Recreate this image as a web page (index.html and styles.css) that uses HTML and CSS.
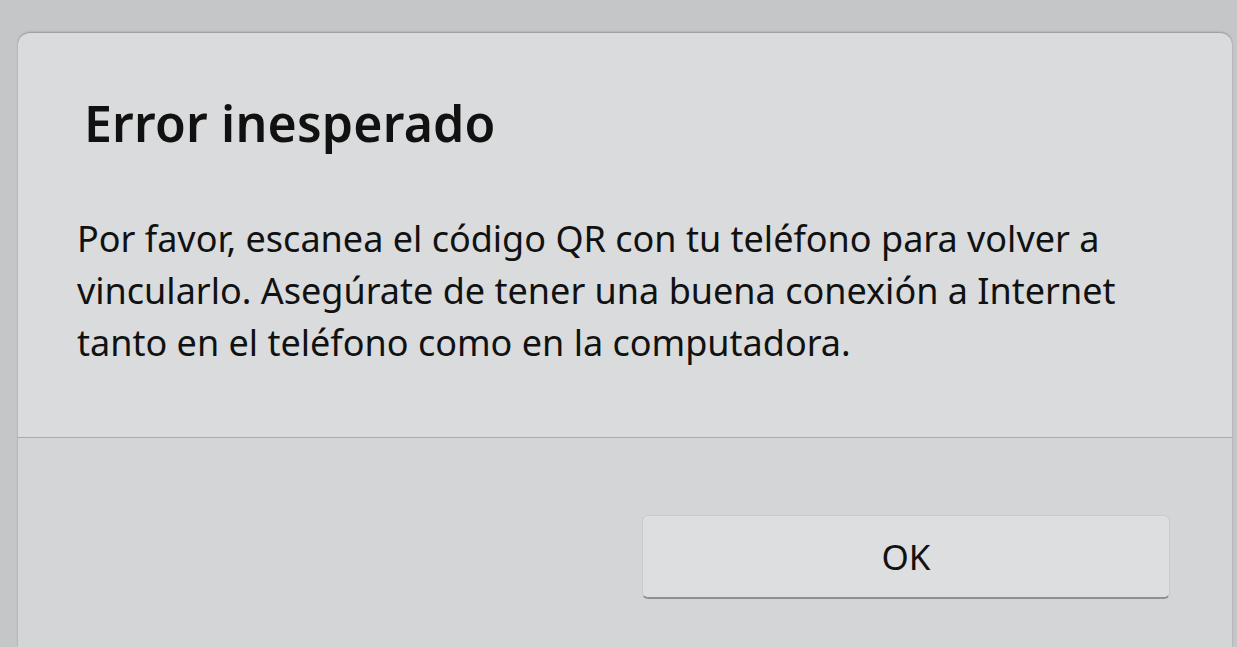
FILE: index.html
```html
<!DOCTYPE html>
<html>
  <head>
    <title>Error inesperado</title>
    <link rel="stylesheet" href="styles.css">
  </head>
  <body>
    <div class="dialog">
      <div class="content">
        <h1 class="title">Error inesperado</h1>
        <p class="message">
          Por favor, escanea el código QR con tu teléfono para volver a<br>
          vincularlo. Asegúrate de tener una buena conexión a Internet<br>
          tanto en el teléfono como en la computadora.
        </p>
      </div>
      <div class="footer">
        <button class="btn">OK</button>
      </div>
    </div>
  </body>
</html>
```

FILE: styles.css
```css
html,
body {
  margin: 0;
  height: 100%;
  overflow: hidden;
}
body {
  background: #c4c6c7;
  font-family: "Noto Sans", "Open Sans", sans-serif;
  color: #111;
  padding: 33px 5px 0 18px;
  box-sizing: border-box;
}
.dialog {
  background: #d9dbdc;
  border-radius: 12px 12px 0 0;
  box-shadow: 0 -1px 2px rgba(0, 0, 0, 0.25);
  height: 614px;
  display: flex;
  flex-direction: column;
}
.content {
  padding: 65px 40px 0 59px;
  height: 404px;
  flex: none;
  box-sizing: border-box;
}
.title {
  margin: 0 0 0 7px;
  font-size: 50px;
  font-weight: 600;
  line-height: 1;
  letter-spacing: 0.2px;
}
.message {
  margin: 65px 0 0 0;
  font-size: 36px;
  line-height: 52px;
  white-space: nowrap;
}
.footer {
  border-top: 1px solid #a9abad;
  background: #d3d5d6;
  flex: 1;
  display: flex;
  justify-content: flex-end;
  padding: 77px 62px 0 0;
}
.btn {
  width: 528px;
  height: 84px;
  background: #dcdedf;
  border: 1px solid #c9cbcc;
  border-bottom: 2px solid #8e9092;
  border-radius: 6px;
  font-family: inherit;
  font-size: 35px;
  color: #111;
  padding: 0;
}
```
